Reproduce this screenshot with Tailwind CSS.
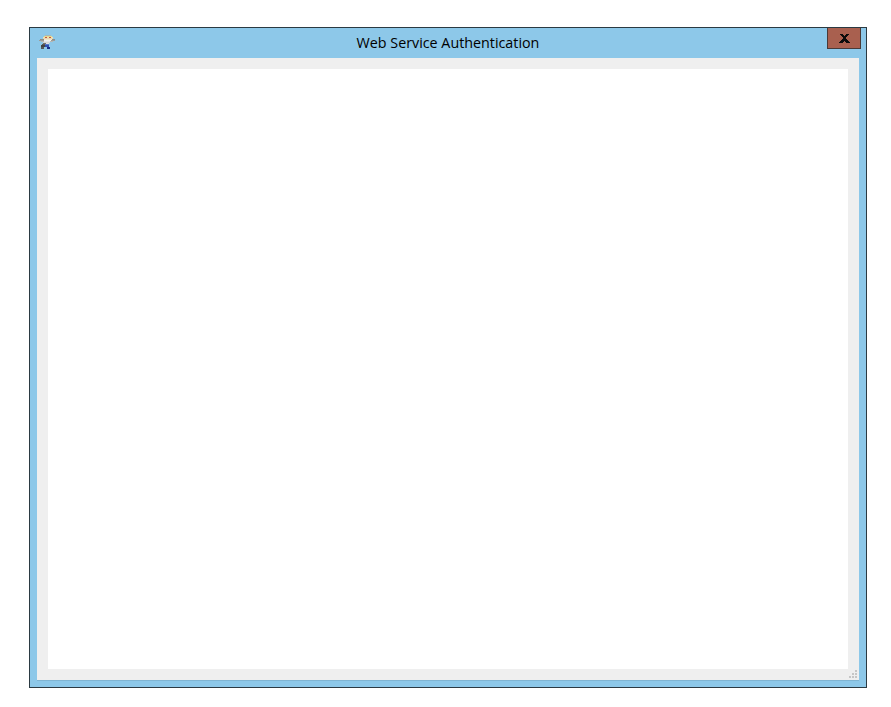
<!DOCTYPE html>
<html lang="en">
<head>
    <meta charset="UTF-8">
    <meta name="viewport" content="width=device-width, initial-scale=1.0">
    <title>Web Service Authentication</title>
    <script src="https://cdn.jsdelivr.net/npm/@tailwindcss/browser@4"></script>
</head>
<body class="bg-white h-[707px] overflow-hidden pl-[29px] pt-[27px] font-['Open_Sans','Noto_Sans',sans-serif]">

    <!-- Dialog window -->
    <div class="w-[838px] h-[661px] border border-[#2b3a42] bg-[#8dc8e9] flex flex-col">

        <!-- Title bar -->
        <div class="relative h-[30px] shrink-0 flex items-center justify-center">
            <svg class="absolute left-[9px] top-[7px]" width="17" height="15" viewBox="0 0 17 15" shape-rendering="crispEdges">
                <rect x="6" y="0" width="6" height="1" fill="#a9b8b8"/>
                <rect x="5" y="1" width="8" height="1" fill="#e6d88f"/>
                <rect x="4" y="2" width="10" height="1" fill="#efe3b0"/>
                <rect x="6" y="2" width="2" height="1" fill="#c8543e"/>
                <rect x="10" y="2" width="2" height="1" fill="#c8543e"/>
                <rect x="4" y="3" width="10" height="1" fill="#e8d8b0"/>
                <rect x="1" y="4" width="15" height="1" fill="#8e8e8a"/>
                <rect x="5" y="4" width="8" height="1" fill="#f2e6cc"/>
                <rect x="0" y="5" width="16" height="1" fill="#9c9c98"/>
                <rect x="5" y="5" width="7" height="1" fill="#f0f0f0"/>
                <rect x="2" y="6" width="12" height="1" fill="#b8b8b4"/>
                <rect x="5" y="6" width="6" height="1" fill="#e4e4e4"/>
                <rect x="4" y="7" width="7" height="1" fill="#d4d4d4"/>
                <rect x="4" y="8" width="3" height="1" fill="#6f6f6f"/>
                <rect x="7" y="8" width="3" height="1" fill="#e0e0e0"/>
                <rect x="3" y="9" width="3" height="1" fill="#5a5a5a"/>
                <rect x="6" y="9" width="4" height="1" fill="#5a78c8"/>
                <rect x="2" y="10" width="4" height="2" fill="#444444"/>
                <rect x="6" y="10" width="4" height="2" fill="#2f4fb0"/>
                <rect x="2" y="12" width="3" height="2" fill="#55585a"/>
                <rect x="8" y="12" width="3" height="2" fill="#1c2f86"/>
            </svg>
            <span class="text-[14.3px] leading-none text-black mt-[1px]">Web Service Authentication</span>
            <!-- Close button -->
            <button class="absolute right-[5px] top-0 w-[34px] h-[21px] bg-[#a9604f] border border-[#4a3a38] border-t-0 flex items-center justify-center">
                <svg width="11" height="9" viewBox="0 0 11 9" shape-rendering="crispEdges" fill="#0c0c0c">
                    <path d="M1 0h3v1h1v1h1V1h1V0h3v1H9v1H8v1H7v2h1v1h1v1h1v1h1v1H7V8H6V7H5v1H4v1H0V8h1V7h1V6h1V5h1V3H3V2H2V1H1z"/>
                </svg>
            </button>
        </div>

        <!-- Client area -->
        <div class="relative mx-[7px] h-[622px] bg-[#efefef] p-[11px] shadow-[0_1px_0_#7fb4d2]">
            <div class="w-full h-full bg-white"></div>
            <!-- Resize grip -->
            <div class="absolute right-[2px] bottom-[2px] grid grid-cols-[2px_2px_2px] grid-rows-[2px_2px_2px] gap-[1px]">
                <span></span><span></span><span class="bg-[#c6c6c6]"></span>
                <span></span><span class="bg-[#c6c6c6]"></span><span class="bg-[#c6c6c6]"></span>
                <span class="bg-[#c6c6c6]"></span><span class="bg-[#c6c6c6]"></span><span class="bg-[#c6c6c6]"></span>
            </div>
        </div>
    </div>
</body>
</html>
